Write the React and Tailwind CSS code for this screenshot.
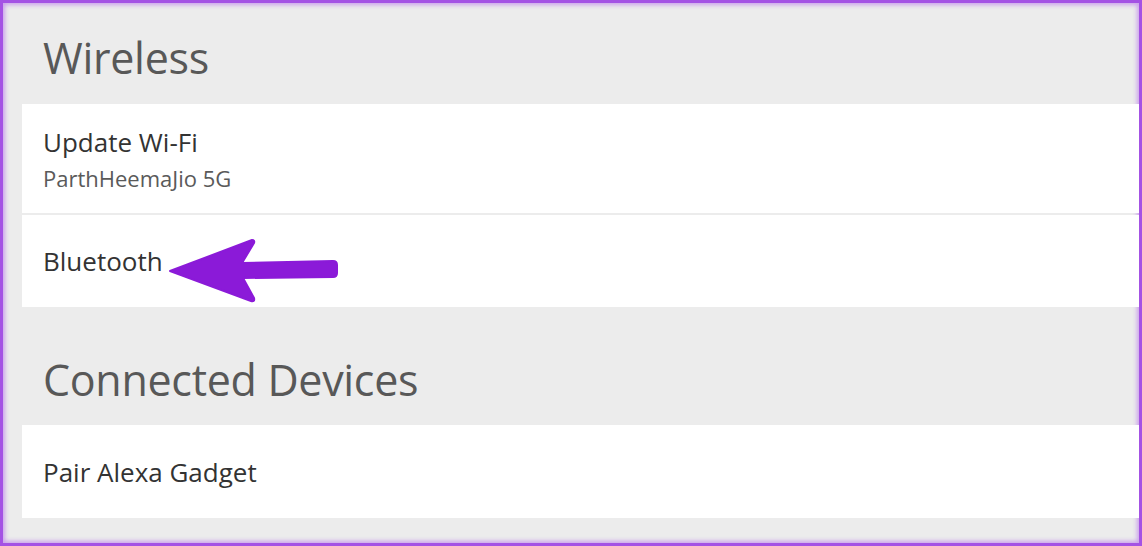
import React from "react";

const Arrow = () => (
  <svg
    className="absolute left-[160px] top-[230px]"
    width="180"
    height="76"
    viewBox="160 230 180 76"
  >
    <path
      d="M167 268 L249 237 Q252 237 251 240 L239 260 L330 258 Q334 258 334 262 L334 270 Q334 274 330 274 L240 275 L251 295 Q252 299 248 298 Z"
      fill="#8b1ad8"
      stroke="#8b1ad8"
      strokeWidth="2"
      strokeLinejoin="round"
    />
  </svg>
);

const Row = ({ title, subtitle, className }) => (
  <div className={`flex flex-col justify-center pl-[21px] bg-white ${className}`}>
    <div className="text-[26px] leading-[34px] text-[#333333]">{title}</div>
    {subtitle && (
      <div className="mt-[4px] text-[22px] leading-[30px] text-[#5a5a5a]">{subtitle}</div>
    )}
  </div>
);

export default function App() {
  return (
    <div
      className="relative w-[1142px] h-[546px] overflow-hidden bg-[#ececec] border-[3px] border-[#a452e4] shadow-[inset_0_0_4px_2px_rgba(178,110,235,0.6)]"
      style={{ fontFamily: '"Open Sans", "Noto Sans", sans-serif' }}
    >
      <div className="pl-[19px]">
        <div className="h-[101px] flex items-center pl-[21px] pt-[10px] text-[43px] tracking-[-0.3px] text-[#585858]">
          Wireless
        </div>
        <div className="flex flex-col gap-[2px]">
          <Row className="h-[109px]" title="Update Wi-Fi" subtitle="ParthHeemaJio 5G" />
          <Row className="h-[92px]" title="Bluetooth" />
        </div>
        <div className="h-[118px] flex items-center pl-[21px] pt-[28px] text-[43px] tracking-[-0.3px] text-[#585858]">
          Connected Devices
        </div>
        <Row className="h-[93px]" title="Pair Alexa Gadget" />
      </div>
      <Arrow />
    </div>
  );
}
